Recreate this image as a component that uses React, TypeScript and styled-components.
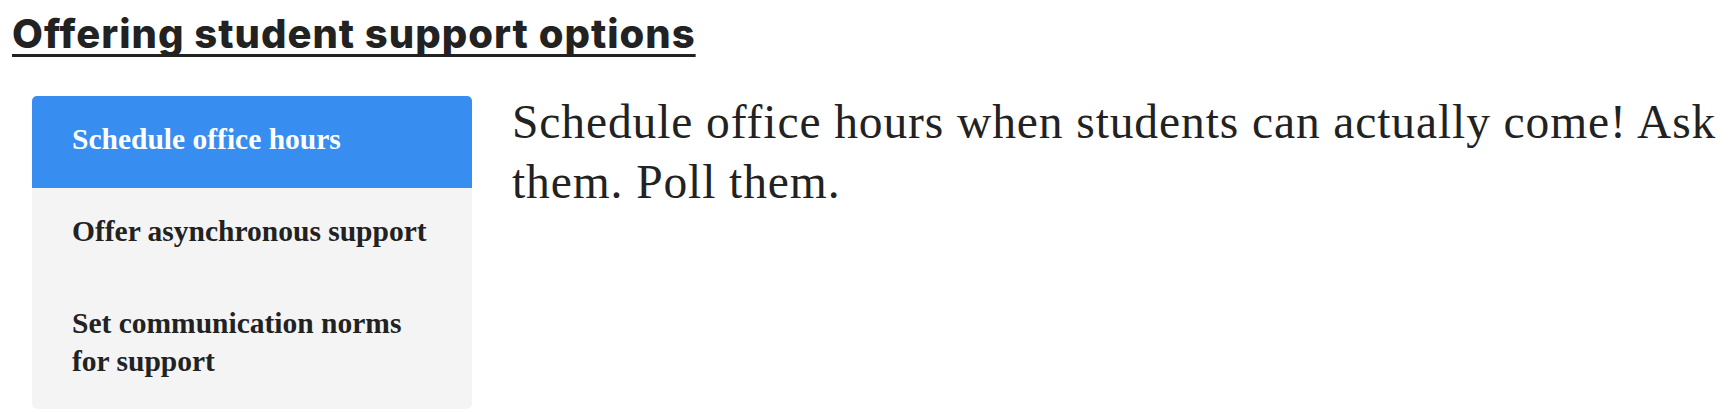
import React, { useState } from "react";
import styled, { createGlobalStyle } from "styled-components";

const GlobalStyle = createGlobalStyle`
  html, body {
    margin: 0;
    padding: 0;
    background: #ffffff;
  }
  body {
    font-family: "Liberation Serif", serif;
    color: #222222;
  }
`;

const Page = styled.section`
  padding: 11px 0 0 12px;
  box-sizing: border-box;
  width: 1734px;
`;

const Heading = styled.h2`
  margin: 0;
  font-family: "Inter", "Liberation Sans", sans-serif;
  font-weight: 800;
  font-size: 40px;
  line-height: 46px;
  letter-spacing: 1px;
  color: #222222;
  text-decoration: underline;
  text-decoration-thickness: 3px;
  text-underline-offset: 6px;
  text-decoration-skip-ink: none;
`;

const Layout = styled.div`
  display: flex;
  align-items: flex-start;
  gap: 40px;
  margin: 35px 0 0 20px;
`;

const TabList = styled.div`
  display: flex;
  flex-direction: column;
  flex: 0 0 440px;
  width: 440px;
  margin-top: 4px;
  background: #f4f4f4;
  border-radius: 5px;
  overflow: hidden;
`;

const Tab = styled.button<{ $active: boolean }>`
  display: block;
  width: 100%;
  box-sizing: border-box;
  border: none;
  margin: 0;
  padding: 24.3px 40px 29.4px 40px;
  text-align: left;
  font-family: "Liberation Serif", serif;
  font-weight: 700;
  font-size: 29.5px;
  line-height: 38px;
  cursor: pointer;
  background: ${(p) => (p.$active ? "#388ef0" : "transparent")};
  color: ${(p) => (p.$active ? "#ffffff" : "#222222")};
`;

const Panel = styled.p`
  flex: 1;
  margin: 0;
  font-family: "Liberation Serif", serif;
  font-size: 47.5px;
  line-height: 60px;
  letter-spacing: 0.9px;
  color: #222222;
`;

const tabs = [
  {
    label: "Schedule office hours",
    body: "Schedule office hours when students can actually come! Ask them. Poll them.",
  },
  {
    label: "Offer asynchronous support",
    body: "Offer asynchronous support so students can get help on their own time.",
  },
  {
    label: "Set communication norms for support",
    body: "Set communication norms for support so students know when to expect a reply.",
  },
];

export default function App() {
  const [active, setActive] = useState(0);
  return (
    <>
      <GlobalStyle />
      <Page>
        <Heading>Offering student support options</Heading>
        <Layout>
          <TabList>
            {tabs.map((t, i) => (
              <Tab key={t.label} $active={i === active} onClick={() => setActive(i)}>
                {t.label}
              </Tab>
            ))}
          </TabList>
          <Panel>{tabs[active].body}</Panel>
        </Layout>
      </Page>
    </>
  );
}
